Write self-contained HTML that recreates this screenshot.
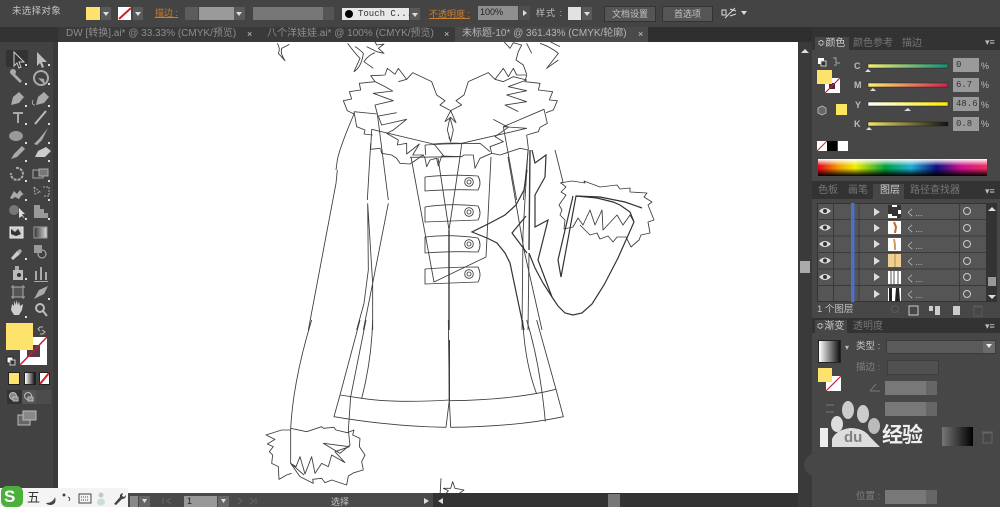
<!DOCTYPE html>
<html><head><meta charset="utf-8">
<style>
html,body{margin:0;padding:0;width:1000px;height:507px;overflow:hidden;background:#444}
body{font-family:"Liberation Sans","Noto Sans CJK SC",sans-serif;position:relative;color:#bdbdbd}
.a{position:absolute}
.t{position:absolute;white-space:nowrap;font-size:9px;line-height:12px}
.btn{position:absolute;background:#555;border:1px solid #333;box-sizing:border-box;text-align:center;font-size:9px;line-height:14px;color:#c4c4c4}
.dd{position:absolute;background:#5a5a5a;width:10px;height:14px}
.dd:after{content:"";position:absolute;left:2px;top:5px;border:3px solid transparent;border-top:4px solid #ddd}
svg{position:absolute;left:0;top:0;overflow:visible}
</style></head>
<body>
<!-- top bar -->
<div class="a" style="left:0;top:0;width:1000px;height:27px;background:#444"></div>
<div class="t" style="left:12px;top:6px;font-size:9.5px;color:#c4c4c4;letter-spacing:.3px">未选择对象</div>
<div class="a" style="left:86px;top:7px;width:14px;height:13px;background:#fde36c"></div>
<div class="dd" style="left:101px;top:7px;height:13px"></div>
<div class="a" style="left:118px;top:7px;width:13px;height:13px;background:#fff"></div>
<svg width="1000" height="30"><path d="M119 19L131 8" stroke="#c22" stroke-width="2"/></svg>
<div class="dd" style="left:133px;top:7px;height:13px"></div>
<div class="t" style="left:155px;top:7px;color:#c77f32;text-decoration:underline">描边 :</div>
<div class="a" style="left:185px;top:7px;width:13px;height:13px;background:#5c5c5c"></div>
<div class="a" style="left:199px;top:7px;width:35px;height:13px;background:#9a9a9a"></div>
<div class="dd" style="left:234px;top:7px;width:11px;height:13px"></div>
<div class="a" style="left:253px;top:7px;width:70px;height:13px;background:#777"></div>
<div class="a" style="left:323px;top:7px;width:11px;height:13px;background:#555"></div>
<div class="a" style="left:342px;top:8px;width:67px;height:12px;background:#e8e8e8"></div>
<div class="a" style="left:345px;top:10px;width:8px;height:8px;background:#000;border-radius:50%"></div>
<div class="t" style="left:358px;top:8px;color:#333;font-family:'Liberation Mono',monospace;font-size:9px">Touch C...</div>
<div class="dd" style="left:410px;top:8px;height:12px"></div>
<div class="t" style="left:429px;top:8px;color:#c77f32;text-decoration:underline">不透明度 :</div>
<div class="a" style="left:478px;top:6px;width:40px;height:14px;background:#8f8f8f;color:#222;font-size:9px;line-height:13px;text-indent:2px">100%</div>
<div class="a" style="left:519px;top:6px;width:11px;height:14px;background:#4f4f4f"></div>
<div class="a" style="left:523px;top:10px;border:3px solid transparent;border-left:4px solid #ddd"></div>
<div class="t" style="left:536px;top:7px;letter-spacing:1px">样式 :</div>
<div class="a" style="left:568px;top:7px;width:13px;height:13px;background:#e2e2e2"></div>
<div class="dd" style="left:582px;top:7px;height:13px"></div>
<div class="btn" style="left:604px;top:6px;width:52px;height:16px">文档设置</div>
<div class="btn" style="left:662px;top:6px;width:51px;height:16px">首选项</div>
<svg width="1000" height="30" fill="none" stroke="#ddd"><path d="M722 10h4v5h-4zM730 9l6 2M730 16l6-2M725 18l10-10"/><path d="M741 11h6l-3 4z" fill="#ddd" stroke="none"/></svg>

<!-- tab bar -->
<div class="a" style="left:0;top:27px;width:812px;height:15px;background:#2f2f2f"></div>
<div class="a" style="left:0;top:27px;width:58px;height:15px;background:#333"></div>
<div class="a" style="left:58px;top:27px;width:397px;height:15px;background:#3a3a3a"></div>
<div class="a" style="left:455px;top:27px;width:193px;height:15px;background:#4a4a4a"></div>
<div class="t" style="left:66px;top:28px;color:#8d8d8d;font-size:10px">DW [转换].ai* @ 33.33% (CMYK/预览)</div>
<div class="t" style="left:247px;top:28px;color:#ccc;font-size:9px">×</div>
<div class="t" style="left:267px;top:28px;color:#8d8d8d;font-size:10px">八个洋娃娃.ai* @ 100% (CMYK/预览)</div>
<div class="t" style="left:444px;top:28px;color:#ccc;font-size:9px">×</div>
<div class="t" style="left:462px;top:28px;color:#b5b5b5;font-size:10px">未标题-10* @ 361.43% (CMYK/轮廓)</div>
<div class="t" style="left:638px;top:28px;color:#ccc;font-size:9px">×</div>

<!-- canvas -->
<div class="a" style="left:58px;top:42px;width:740px;height:451px;background:#fff"></div>
<svg width="1000" height="507" style="clip-path:polygon(58px 42px,798px 42px,798px 493px,58px 493px)">
<g fill="none" stroke="#3c3c3c" stroke-linejoin="round">
<g transform="translate(260,40) scale(.33333)" stroke-width="2.6">
<path d="M52 10Q62 25 55 40L75 62Q60 40 65 25L88 13"/>
<path d="M263 10Q285 40 300 55L282 95Q305 80 310 40Q295 25 285 20M340 85L312 65Q325 45 345 38M320 20L350 35L372 40L355 25L372 12L350 15L345 5"/>
<path d="M732 5L750 25L760 8L785 15L775 35L768 60L790 75L800 103M800 10L815 40M840 10Q870 20 895 40L860 85L895 60M870 5L900 20"/>
<path d="M282 222L262 212L250 182L275 177L268 155L302 150L298 130L345 125L332 107L375 105L382 85L405 103L415 85L440 118L415 125M458 98L515 125L530 165L555 182L540 195L572 212L555 245L572 232L588 248L572 212L605 195L588 182L612 165L625 125L685 98L705 118L730 85L745 110L760 85L770 105L800 105L795 125L840 130L835 150L878 155L868 180L892 182L880 210L858 218"/>
<path d="M440 118L458 98M345 125L375 140L398 153L340 160L372 172L400 182L345 195L352 222M410 218L355 228L365 255L440 238L400 270L380 280L415 300L412 315L440 310L440 342L478 312L458 345L490 345"/>
<path d="M705 118L730 125L760 110L800 120L745 140L800 152L740 165L800 185L735 195L775 215M700 238L745 262L705 290L730 305L690 320L695 340"/>
<path d="M282 222Q240 320 232 360L228 390M282 215L352 222L385 480M282 215L290 260L315 270L312 282L338 285M335 268L520 312Q560 308 605 310L800 265L730 260M730 260L852 208L862 250L840 262L835 275L800 285M335 268L332 328L362 325M362 328L365 340L395 345L410 355L420 370L450 372L490 345L495 355L500 380L510 360L530 355L535 378L545 348L605 350L612 345L640 345L645 385L660 355L695 340L720 345L780 325L805 330M332 310L322 480M730 260L770 480M800 285L805 325L790 480"/>
<path d="M522 312L553 350M605 312L600 350M495 315L555 312L660 310L690 335M450 352L605 350M495 315L497 345M570 232L562 270L572 305L580 270L570 232M566 290L572 305"/>
</g>

<g stroke-width=".87">
<path d="M425 177Q450 174 478 176Q482 183 478 190Q450 189 425 191Z"/>
<path d="M425 207Q450 203 478 206Q482 213 478 220Q450 221 425 222Z"/>
<path d="M425 237Q450 234 478 238Q482 245 478 252Q450 251 425 253Z"/>
<path d="M425 269Q450 267 478 267Q482 275 478 282Q450 283 425 284Z"/>
<circle cx="469" cy="182" r="4.300"/><circle cx="469" cy="182" r="2"/>
<circle cx="469" cy="212" r="4.300"/><circle cx="469" cy="212" r="2"/>
<circle cx="469" cy="244" r="4.300"/><circle cx="469" cy="244" r="2"/>
<circle cx="469" cy="274" r="4.300"/><circle cx="469" cy="274" r="2"/>
<path d="M411 157L434 282L486 257L491 157M438 158L449 230M460 157L449 230"/>
<path d="M508 157L524 250L542 330M528 150L523 233L522 330"/>
<path d="M529 253L528 330"/>
<path d="M555 150L563 182L561 183L566 187L561 192L566 195L559 205L562 210L560 215L565 220L564 229L573 227L578 218L583 225L590 210L595 225L602 210L603 230L617 215L623 225L630 215L634 222"/>
<path d="M560 183L572 181L585 183L584 181L600 187L617 185L620 189L630 188L630 192L647 193L644 197L652 202L648 205L654 220L648 222L650 233L641 235L639 240L631 247L626 237L617 237L613 242L608 236L600 239L597 233L590 235L580 225"/>
<g stroke-width="1.400"><path d="M449 230V330"/><path d="M530 150L529 250"/></g>
</g>

<g transform="translate(260,170) scale(.33333)" stroke-width="2.6">
<path d="M232 0L228 40L145 480M323 100L338 340L338 480M323 100L325 300L312 400L290 480M385 100L338 340L310 480"/>
</g>
<g transform="translate(260,320) scale(.33333)" stroke-width="2.6">
<path d="M92 325Q100 180 155 0M300 0L240 225L222 290Q400 320 558 322L568 240Q400 250 305 235L240 225M318 0L272 230L265 330M338 0Q335 120 305 235M565 0L568 240"/>
<path d="M568 60L568 240" stroke-width="4"/>
<path d="M568 240L572 322Q770 320 910 290L888 208Q760 240 568 242M788 0Q795 130 830 222M800 0Q840 130 856 305M830 0L888 208"/>
<path d="M92 325L92 430L120 470L160 490L158 478L185 475L195 488L215 480L260 495L265 468L282 458L310 450L305 425L315 405L298 380L300 355L278 345L282 330L262 338L228 330L222 322L190 325L185 320L140 335L92 325M92 330L65 330L18 345L45 358L22 372L40 380L28 395L38 405L35 430L55 440L57 478L80 465L95 460"/>
<path d="M265 330L270 375L240 400L190 370L268 380L225 395L255 428L215 405L205 440L185 430L165 460L155 410L135 462L120 410L108 440L92 430L132 465"/>
<path d="M543 475L540 530M578 485L585 505L612 510L595 522L555 525L565 512L550 505L572 505Z"/>
</g>
</g>
</svg>

<!-- left tools -->
<div class="a" style="left:0;top:42px;width:53px;height:465px;background:#424242"></div>
<div class="a" style="left:53px;top:42px;width:5px;height:465px;background:#3a3a3a"></div>
<div class="a" style="left:6px;top:50px;width:22px;height:17px;background:#333"></div>
<svg width="60" height="440">
<g fill="#aaa" stroke="none">
<path d="M14 52l0 14 3-3 2 5 2-1-2-5h5z" fill="none" stroke="#ccc"/>
<path d="M37 52l0 14 3-3 2 5 2-1-2-5h5z" fill="#bbb"/>
<path d="M11 72l3 1 8 8-2 2-8-8z"/><circle cx="13" cy="72" r="3"/>
<circle cx="41" cy="78" r="7" fill="none" stroke="#aaa" stroke-width="2"/><path d="M38 78l6 1 1 6z"/>
<path d="M11 105l2-8 6-5 5 5-5 6z"/><path d="M36 105l2-8 6-5 5 5-5 6z"/><path d="M33 100q-2 5 2 5" fill="none" stroke="#aaa"/>
<path d="M13 112h10v2h-4v9h-2v-9h-4z"/>
<path d="M35 124l11-13" stroke="#bbb" stroke-width="2"/>
<ellipse cx="16" cy="136" rx="7" ry="5" fill="#999"/>
<path d="M34 144l5-5 9-11-6 12-5 5z"/>
<path d="M11 159l3-5 8-8 3 3-8 8z"/>
<path d="M35 157l3-6 8-4 5 4-6 6z" fill="#ccc"/>
<path d="M16 168a6 6 0 1 1-5 5" fill="none" stroke="#aaa" stroke-width="2" stroke-dasharray="3 1"/>
<rect x="33" y="170" width="10" height="8" fill="none" stroke="#aaa"/><rect x="39" y="169" width="9" height="7" fill="#777" stroke="#aaa"/>
<path d="M10 198l4-7 3 3 3-4 3 4 2-1-4 3-2 3-4-2-3 2z"/>
<path d="M34 187l6 5-5 2zM43 187h6v9h-6" stroke="#aaa" stroke-dasharray="2 1" fill="none"/>
<circle cx="14" cy="210" r="5" fill="#777"/><path d="M19 208v10l3-2 3 3-3-5h3z" fill="#ddd"/>
<path d="M34 205h6v4h4v4h4v5h-14z" fill="#999"/>
<rect x="10" y="227" width="13" height="11" fill="#ccc" stroke="#eee"/><path d="M11 229l4 3 3-3 3 5-5 2-5-2z" fill="#333"/>
<defs><linearGradient id="g1"><stop offset="0" stop-color="#333"/><stop offset="1" stop-color="#ddd"/></linearGradient></defs>
<rect x="34" y="227" width="13" height="11" fill="url(#g1)" stroke="#999"/>
<path d="M11 258l6-7 3 3-7 6z" fill="#ccc"/><path d="M17 251l3-2 2 2-2 3z"/>
<circle cx="42" cy="254" r="4" fill="none" stroke="#bbb"/><rect x="34" y="245" width="8" height="8" fill="#999"/>
<rect x="13" y="270" width="10" height="10" fill="#bbb"/><circle cx="19" cy="275" r="2" fill="#333"/><rect x="15" y="266" width="4" height="4"/>
<path d="M35 280v-9h2v9zM40 280v-13h2v13zM45 280v-8h2v8z"/><path d="M34 281h14v1h-14z"/>
<rect x="13" y="287" width="10" height="10" fill="#555" stroke="#aaa"/><path d="M11 287h14M11 297h14M13 285v14M23 285v14" stroke="#aaa"/>
<path d="M34 299l5-9 9-4-4 8-8 4z"/>
<path d="M11 310l1-6 2 2v-5l2 4v-5l2 5 1-4 1 5 3-2-1 6-3 5h-5z" fill="#ccc"/>
<circle cx="40" cy="308" r="4" fill="none" stroke="#bbb" stroke-width="2"/><path d="M43 311l4 5" stroke="#bbb" stroke-width="2"/>
</g>
<g fill="#ddd"><path d="M25 64h2v2h-2zM48 64h2v2h-2zM25 83h2v2h-2zM48 83h2v2h-2zM25 105h2v2h-2zM48 105h2v2h-2zM25 123h2v2h-2zM48 123h2v2h-2zM25 142h2v2h-2zM48 142h2v2h-2zM25 160h2v2h-2zM48 160h2v2h-2zM25 180h2v2h-2zM48 180h2v2h-2zM25 199h2v2h-2zM48 199h2v2h-2zM25 218h2v2h-2zM48 218h2v2h-2zM25 258h2v2h-2zM25 278h2v2h-2zM48 298h2v2h-2zM25 316h2v2h-2z"/></g>
</svg>
<!-- fill/stroke -->
<div class="a" style="left:20px;top:337px;width:27px;height:28px;background:#fff"></div>
<div class="a" style="left:27px;top:345px;width:13px;height:12px;background:#5a3b42"></div>
<svg width="60" height="440"><path d="M20 365L47 337" stroke="#b8263a" stroke-width="1.5"/>
<path d="M43 327h-3l-2 2 2 2M42 330l3 2-2 2h-3" fill="none" stroke="#bbb"/>
<rect x="7" y="357" width="6" height="6" fill="#fff" stroke="#222"/><rect x="10" y="360" width="5" height="5" fill="#333" stroke="#ccc"/></svg>
<div class="a" style="left:6px;top:323px;width:27px;height:27px;background:#fde36c"></div>
<div class="a" style="left:8px;top:372px;width:12px;height:13px;background:#fde36c;border:1px solid #222;box-sizing:border-box"></div>
<div class="a" style="left:24px;top:372px;width:12px;height:13px;background:linear-gradient(90deg,#fff,#111);border:1px solid #222;box-sizing:border-box"></div>
<div class="a" style="left:39px;top:372px;width:11px;height:13px;background:#fff;border:1px solid #222;box-sizing:border-box"></div>
<svg width="60" height="440"><path d="M40 384L49 373" stroke="#c22" stroke-width="2"/></svg>
<div class="a" style="left:7px;top:390px;width:15px;height:14px;background:#333"></div>
<div class="a" style="left:22px;top:390px;width:14px;height:14px;background:#555"></div>
<div class="a" style="left:36px;top:390px;width:15px;height:14px;background:#4c4c4c"></div>
<svg width="60" height="440" fill="#888" stroke="#bbb"><circle cx="13" cy="396" r="3.500"/><rect x="13" y="397" width="5" height="4"/><circle cx="28" cy="396" r="3.500" fill="none"/><rect x="28" y="397" width="5" height="4"/>
<rect x="18" y="415" width="12" height="10" fill="#666"/><rect x="23" y="411" width="13" height="9" fill="#888"/></svg>

<!-- vertical scroll -->
<div class="a" style="left:798px;top:42px;width:14px;height:465px;background:#3a3a3a"></div>
<div class="a" style="left:800px;top:261px;width:10px;height:12px;background:#aaa"></div>
<div class="a" style="left:801px;top:45px;border:4px solid transparent;border-bottom:4px solid #ddd"></div>

<!-- right panels -->
<div class="a" style="left:812px;top:27px;width:188px;height:480px;background:#474747"></div>
<div class="a" style="left:812px;top:27px;width:188px;height:10px;background:#333"></div>
<div class="a" style="left:812px;top:37px;width:188px;height:13px;background:#333"></div>
<div class="a" style="left:815px;top:37px;width:34px;height:13px;background:#474747"></div>
<div class="t" style="left:817px;top:38px;font-size:10px;color:#ccc">≎颜色</div>
<div class="t" style="left:853px;top:38px;font-size:10px;color:#777">颜色参考</div>
<div class="t" style="left:902px;top:38px;font-size:10px;color:#777">描边</div>
<div class="t" style="left:985px;top:36px;color:#bbb">▾≡</div>

<svg width="1000" height="507">
<defs>
<linearGradient id="c"><stop offset="0" stop-color="#f6ec70"/><stop offset="1" stop-color="#0f8f7a"/></linearGradient>
<linearGradient id="m"><stop offset="0" stop-color="#fdf070"/><stop offset="1" stop-color="#d81e4c"/></linearGradient>
<linearGradient id="y"><stop offset="0" stop-color="#fff"/><stop offset="1" stop-color="#ffe800"/></linearGradient>
<linearGradient id="k"><stop offset="0" stop-color="#f8e76c"/><stop offset="1" stop-color="#111"/></linearGradient>
<linearGradient id="sp"><stop offset="0" stop-color="#e8001c"/><stop offset=".12" stop-color="#f0a000"/><stop offset=".22" stop-color="#f0ee00"/><stop offset=".4" stop-color="#00a040"/><stop offset=".55" stop-color="#20b0d8"/><stop offset=".7" stop-color="#10107e"/><stop offset=".85" stop-color="#d0108c"/><stop offset="1" stop-color="#f03060"/></linearGradient>
<linearGradient id="v" x1="0" y1="0" x2="0" y2="1"><stop offset="0" stop-color="#fff"/><stop offset=".4" stop-color="#fff" stop-opacity="0"/><stop offset=".55" stop-color="#000" stop-opacity="0"/><stop offset="1" stop-color="#000"/></linearGradient>
<linearGradient id="g3"><stop offset="0" stop-color="#777"/><stop offset="1" stop-color="#000"/></linearGradient>
</defs>
<rect x="868" y="64" width="80" height="4" fill="url(#c)" stroke="#222" stroke-width=".5"/>
<rect x="868" y="83" width="80" height="4" fill="url(#m)" stroke="#222" stroke-width=".5"/>
<rect x="868" y="102" width="80" height="4" fill="url(#y)" stroke="#222" stroke-width=".5"/>
<rect x="868" y="122" width="80" height="4" fill="url(#k)" stroke="#222" stroke-width=".5"/>
<g fill="#ddd"><path d="M865 72l3-3 3 3z M870 91l3-3 3 3zM904 111l4-3 3 3zM866 130l3-3 3 3z"/></g>
<rect x="818" y="159" width="169" height="17" fill="url(#sp)"/>
<rect x="818" y="159" width="169" height="17" fill="url(#v)"/>
<rect x="825" y="78" width="15" height="15" fill="#fff"/><rect x="829" y="83" width="6" height="6" fill="#523"/>
<path d="M825 93L840 78" stroke="#b8263a" stroke-width="1.200"/>
<rect x="817" y="70" width="15" height="14" fill="#fde36c"/>
<rect x="818" y="58" width="6" height="6" fill="#fff"/><rect x="821" y="61" width="5" height="5" fill="#333" stroke="#ccc"/>
<path d="M833 58h3v5h4M837 65h-3" fill="none" stroke="#aaa"/>
<path d="M822 106l4 2v5l-4 2-4-2v-5z" fill="#666" stroke="#aaa"/>
<rect x="836" y="104" width="11" height="11" fill="#fbe660"/>
<rect x="817" y="141" width="10" height="10" fill="#fff"/><path d="M817 151l10-10" stroke="#c22"/>
<rect x="827" y="141" width="10" height="10" fill="#000"/><rect x="838" y="141" width="10" height="10" fill="#fff"/>
</svg>
<div class="t" style="left:854px;top:60px;font-weight:bold">C</div>
<div class="t" style="left:854px;top:79px;font-weight:bold">M</div>
<div class="t" style="left:855px;top:99px;font-weight:bold">Y</div>
<div class="t" style="left:854px;top:118px;font-weight:bold">K</div>
<div class="a" style="left:953px;top:58px;width:26px;height:14px;background:#9a9a9a;color:#333;font:9px/14px 'Liberation Mono',monospace;text-indent:3px">0</div>
<div class="a" style="left:953px;top:78px;width:26px;height:14px;background:#9a9a9a;color:#333;font:9px/14px 'Liberation Mono',monospace;text-indent:3px">6.7</div>
<div class="a" style="left:953px;top:97px;width:26px;height:14px;background:#9a9a9a;color:#333;font:9px/14px 'Liberation Mono',monospace;text-indent:3px">48.6</div>
<div class="a" style="left:953px;top:117px;width:26px;height:14px;background:#9a9a9a;color:#333;font:9px/14px 'Liberation Mono',monospace;text-indent:3px">0.8</div>
<div class="t" style="left:981px;top:60px">%</div><div class="t" style="left:981px;top:79px">%</div><div class="t" style="left:981px;top:99px">%</div><div class="t" style="left:981px;top:118px">%</div>

<!-- layers panel -->
<div class="a" style="left:812px;top:181px;width:188px;height:18px;background:#333"></div>
<div class="a" style="left:873px;top:184px;width:31px;height:15px;background:#474747"></div>
<div class="t" style="left:818px;top:185px;font-size:10px;color:#777">色板</div>
<div class="t" style="left:848px;top:185px;font-size:10px;color:#777">画笔</div>
<div class="t" style="left:880px;top:185px;font-size:10px;color:#ccc">图层</div>
<div class="t" style="left:910px;top:185px;font-size:10px;color:#777">路径查找器</div>
<div class="t" style="left:985px;top:185px;color:#bbb">▾≡</div>
<div class="a" style="left:817px;top:203px;width:170px;height:99px;background:#555;border:1px solid #333;box-sizing:border-box"></div>
<div class="a" style="left:987px;top:203px;width:10px;height:99px;background:#333"></div>
<div class="a" style="left:988px;top:277px;width:8px;height:9px;background:#999"></div>
<svg width="1000" height="507">
<g stroke="#3a3a3a"><path d="M817 219.500h170M817 236h170M817 252.500h170M817 269h170M817 285.500h170M833.500 203v99M859 203v99M959.500 203v99"/></g>
<rect x="851" y="203" width="3.500" height="99" fill="#4a70c8"/>
<g fill="#ddd"><path d="M819 211q6-6 12 0q-6 6-12 0z"/><circle cx="825" cy="211" r="2" fill="#333"/>
<path d="M819 227.500q6-6 12 0q-6 6-12 0z"/><circle cx="825" cy="227.500" r="2" fill="#333"/>
<path d="M819 244q6-6 12 0q-6 6-12 0z"/><circle cx="825" cy="244" r="2" fill="#333"/>
<path d="M819 260.500q6-6 12 0q-6 6-12 0z"/><circle cx="825" cy="260.500" r="2" fill="#333"/>
<path d="M819 277q6-6 12 0q-6 6-12 0z"/><circle cx="825" cy="277" r="2" fill="#333"/></g>
<g fill="#ddd"><path d="M874 208l6 4-6 4zM874 224l6 4-6 4zM874 240l6 4-6 4zM874 257l6 4-6 4zM874 273l6 4-6 4zM874 290l6 4-6 4z"/></g>
<g fill="#fff"><rect x="888" y="205" width="13" height="13"/><rect x="888" y="221" width="13" height="13"/><rect x="888" y="238" width="13" height="13"/><rect x="888" y="254" width="13" height="13"/><rect x="888" y="271" width="13" height="13"/><rect x="888" y="288" width="13" height="13"/></g>
<path d="M888 205h4v2h5v-2h4v5h-3v4h3v4h-4v-2h-5v-2h-4z" fill="#333"/>
<path d="M894 222l2 5-1 6" stroke="#b86a30" stroke-width="2" fill="none"/>
<path d="M894 239l1 6v5" stroke="#c8a060" stroke-width="2" fill="none"/>
<rect x="888" y="254" width="13" height="13" fill="#eed090"/><path d="M895 254v13" stroke="#b85" fill="none"/>
<path d="M891 271v13M894 271v13M898 271v13" stroke="#555"/>
<path d="M889 288h3v13h-3zM896 288h3l1 13h-5z" fill="#222"/>
<g fill="none" stroke="#ccc"><circle cx="967" cy="211" r="3.500"/><circle cx="967" cy="228" r="3.500"/><circle cx="967" cy="244" r="3.500"/><circle cx="967" cy="261" r="3.500"/><circle cx="967" cy="277" r="3.500"/><circle cx="967" cy="294" r="3.500"/></g>
<path d="M988 211l4-4 4 4zM988 295l4 4 4-4z" fill="#ddd"/>
<g fill="#ccc"><rect x="909" y="306" width="9" height="9" fill="none" stroke="#ccc"/><rect x="929" y="306" width="4" height="5"/><rect x="935" y="306" width="5" height="9"/><path d="M953 306h7v9h-7z"/></g>
<path d="M974 307h8v9h-8zM973 306h10" stroke="#5a5a5a" fill="none"/><circle cx="895" cy="309" r="3.500" fill="none" stroke="#5a5a5a"/>
</svg>
<div class="t" style="left:906px;top:207px;color:#bbb">く...</div>
<div class="t" style="left:906px;top:223px;color:#bbb">く...</div>
<div class="t" style="left:906px;top:240px;color:#bbb">く...</div>
<div class="t" style="left:906px;top:256px;color:#bbb">く...</div>
<div class="t" style="left:906px;top:273px;color:#bbb">く...</div>
<div class="t" style="left:906px;top:289px;color:#bbb">く...</div>
<div class="t" style="left:817px;top:304px;font-size:9.5px;color:#c4c4c4">1 个图层</div>

<!-- gradient panel -->
<div class="a" style="left:812px;top:318px;width:188px;height:15px;background:#333"></div>
<div class="a" style="left:815px;top:320px;width:32px;height:13px;background:#474747"></div>
<div class="t" style="left:816px;top:321px;font-size:10px;color:#ccc">≎渐变</div>
<div class="t" style="left:853px;top:321px;font-size:10px;color:#777">透明度</div>
<div class="t" style="left:985px;top:320px;color:#bbb">▾≡</div>
<div class="a" style="left:818px;top:340px;width:23px;height:23px;background:linear-gradient(90deg,#fff,#111);border:1px solid #222;box-sizing:border-box"></div>
<div class="t" style="left:845px;top:342px;font-size:8px">▾</div>
<div class="t" style="left:856px;top:341px;font-size:9.5px;color:#c4c4c4">类型 :</div>
<div class="a" style="left:886px;top:340px;width:110px;height:14px;background:#5a5a5a;border:1px solid #3a3a3a;box-sizing:border-box"></div>
<div class="a" style="left:983px;top:341px;width:12px;height:12px;background:#6a6a6a"></div>
<div class="a" style="left:986px;top:344px;border:3px solid transparent;border-top:4px solid #eee"></div>
<div class="t" style="left:856px;top:362px;color:#808080;font-size:9.5px">描边 :</div>
<div class="a" style="left:887px;top:360px;width:52px;height:15px;background:#505050;border:1px solid #3d3d3d;box-sizing:border-box"></div>
<div class="a" style="left:885px;top:381px;width:52px;height:14px;background:#787878"></div>
<div class="a" style="left:926px;top:381px;width:11px;height:14px;background:#666"></div>
<div class="a" style="left:885px;top:402px;width:52px;height:14px;background:#787878"></div>
<div class="a" style="left:926px;top:402px;width:11px;height:14px;background:#666"></div>
<div class="a" style="left:885px;top:490px;width:52px;height:14px;background:#787878"></div>
<div class="a" style="left:926px;top:490px;width:11px;height:14px;background:#666"></div>
<div class="t" style="left:856px;top:491px;color:#808080;font-size:9.5px">位置 :</div>
<svg width="1000" height="507">
<rect x="826" y="376" width="15" height="15" fill="#fff"/><path d="M826 391l15-15" stroke="#b8263a" stroke-width="1.200"/>
<rect x="818" y="368" width="14" height="14" fill="#fde36c"/>
<path d="M870 391l6-7M870 391h10M826 405h8M826 412h8" stroke="#777" fill="none"/>
<rect x="942" y="427" width="31" height="19" fill="url(#g3)"/>
<path d="M983 433h9v10h-9zM982 432h11" stroke="#666" fill="none"/>
<circle cx="815" cy="465" r="11" fill="#474747"/>
<g fill="#ccc"><ellipse cx="848" cy="410" rx="6" ry="9"/><ellipse cx="863" cy="414" rx="6" ry="9"/><ellipse cx="837" cy="424" rx="6" ry="8" fill="#ddd"/><ellipse cx="874" cy="426" rx="6" ry="8" fill="#bbb"/><path d="M832 447v-8q4-9 18-11q14 0 20 9l10 10z" fill="#ddd"/></g>
<rect x="820" y="428" width="8" height="19" fill="#eee"/>
</svg>
<div class="t" style="left:844px;top:429px;font-size:15px;line-height:18px;font-weight:bold;color:#808080">du</div>
<div class="t" style="left:882px;top:424px;font-size:21px;line-height:24px;font-weight:bold;color:#eee;letter-spacing:-1px">经验</div>

<!-- bottom bar -->
<div class="a" style="left:58px;top:493px;width:375px;height:14px;background:#4a4a4a"></div>
<div class="a" style="left:433px;top:493px;width:365px;height:14px;background:#333"></div>
<div class="a" style="left:608px;top:494px;width:12px;height:13px;background:#777"></div>
<div class="a" style="left:130px;top:496px;width:8px;height:11px;background:#8a8a8a"></div>
<div class="a" style="left:139px;top:496px;width:11px;height:11px;background:#666"></div>
<div class="a" style="left:184px;top:496px;width:33px;height:11px;background:#999;color:#222;font-size:9px;line-height:11px;text-indent:3px">1</div>
<div class="a" style="left:218px;top:496px;width:11px;height:11px;background:#666"></div>
<div class="t" style="left:331px;top:496px;color:#c4c4c4">选择</div>
<svg width="1000" height="507"><path d="M163 498v6M171 498l-4 3 4 3M238 498l4 3-4 3M250 498l4 3-4 3M256 498v6" stroke="#666" fill="none"/>
<path d="M424 498l5 3-5 3zM443 498l-5 3 5 3zM142 499h5l-2.500 4zM221 499h5l-2.500 4z" fill="#ddd"/></svg>
<!-- IME -->
<div class="a" style="left:0;top:488px;width:128px;height:19px;background:#f4f4f4"></div>
<div class="a" style="left:1px;top:486px;width:22px;height:21px;background:#4caf3c;border-radius:6px"></div>
<div class="t" style="left:4px;top:487px;font-size:17px;line-height:20px;font-weight:bold;color:#fff">S</div>
<div class="t" style="left:27px;top:490px;font-size:13px;line-height:16px;color:#333">五</div>
<svg width="1000" height="507"><path d="M46 503q7 0 9-6q2 7-4 8q-4 0-5-2z" fill="#444"/><circle cx="64" cy="495" r="1.500" fill="#444"/><path d="M68 497q3 1 1 4" stroke="#444" fill="none"/>
<rect x="79" y="494" width="12" height="9" fill="none" stroke="#445"/><path d="M81 497h8M81 500h8" stroke="#445" stroke-dasharray="1 1"/>
<circle cx="101" cy="495" r="2.500" fill="#bcc"/><ellipse cx="101" cy="502" rx="4" ry="3.500" fill="#cdd"/>
<path d="M114 504l6-7q-1-3 3-4l-1 3 2 1 2-2q0 4-4 4l-6 6z" fill="#444"/></svg>

<!-- sleeve and side curves, last in the document and above all other layers -->
<svg width="1000" height="507" viewBox="0 0 1000 507" style="z-index:50">
<polyline fill="none" stroke="#333" stroke-width="1.200" points="529,253 535,268 543,283 552,297 558,306 565,313 573,315 582,313 592,304 604,285 618,258 634,222"/>
<polyline fill="none" stroke="#333" stroke-width="1.200" points="634,222 630,212 620,205 613,202 597,198 576,196 561,277 558,260 573,196"/>
<polyline fill="none" stroke="#333" stroke-width="1.200" points="576,196 600,197 625,202 642,208"/>
<polyline fill="none" stroke="#333" stroke-width="1.200" points="527,170 524,190 516,205 505,215 490,223 472,232 487,238 497,243 505,253 510,263 524,330"/>
<polyline fill="none" stroke="#333" stroke-width="1.200" points="526,216 512,233 527,253"/>
<polyline fill="none" stroke="#333" stroke-width="1.200" points="532,150 535,163 546,155 545,177 535,195 535,227 548,220 538,260 552,297"/>
</svg>
</body></html>
